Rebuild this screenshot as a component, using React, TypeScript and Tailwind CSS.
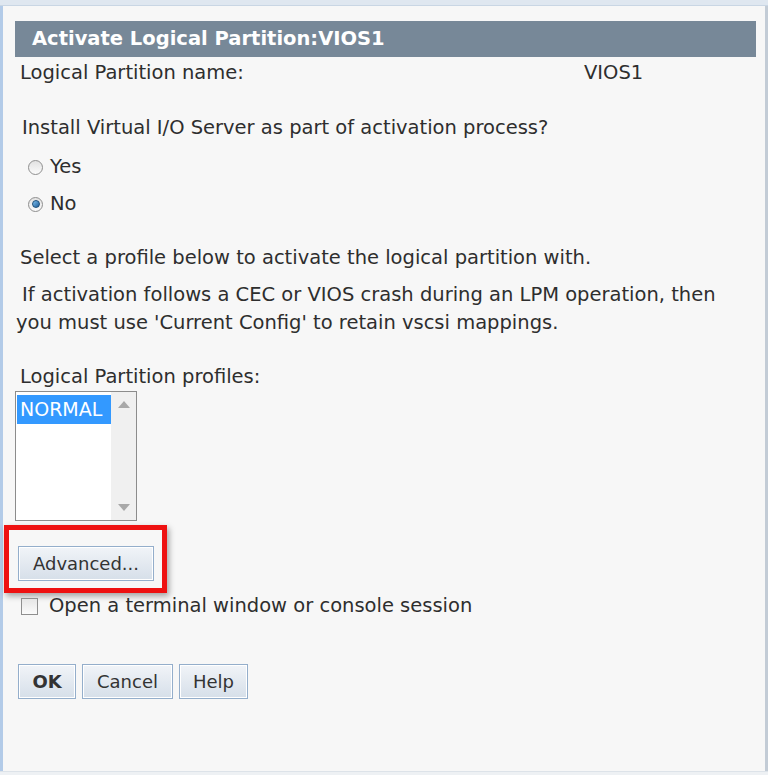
import { useState } from 'react';

const font = { fontFamily: '"DejaVu Sans", Verdana, sans-serif' };

function Radio({ checked }: { checked: boolean }) {
  return (
    <span className="relative inline-flex h-[15px] w-[15px] items-center justify-center rounded-full border border-[#8f8f8f] bg-gradient-to-b from-[#e2e2e2] to-[#fbfbfb]">
      {checked && (
        <span className="h-[8px] w-[8px] rounded-full border border-[#1d4f7a] bg-gradient-to-br from-[#7ec0ee] to-[#1f5f9a]" />
      )}
    </span>
  );
}

function Button({ children, bold, width }: { children: React.ReactNode; bold?: boolean; width: string }) {
  return (
    <button
      type="button"
      className={`${width} h-[35px] border border-[#94aecb] bg-gradient-to-b from-[#f1f4f8] to-[#d6dfe9] text-[18px] leading-none text-[#333] shadow-[inset_0_0_0_1px_#ffffff] ${bold ? 'font-bold' : ''}`}
    >
      {children}
    </button>
  );
}

export default function App() {
  const [install, setInstall] = useState(false);
  const [openTerm, setOpenTerm] = useState(false);

  return (
    <div style={font} className="flex h-[775px] w-[768px] flex-col overflow-hidden bg-[#f7f7f7] text-[#2e2e2e]">
      <div className="h-[6px] border-b border-[#c9d6e4] bg-[#dfe7f0]" />
      <div className="flex flex-1 border-l-[3px] border-r-[3px] border-l-[#b3cbe8] border-r-[#c3ccd6]">
        <div className="flex flex-1 flex-col pl-[12px] pr-[9px]">
          <div className="mt-[15px] flex h-[36px] items-center bg-[#778898] pl-[17px] text-[19.5px] font-bold text-white">
            Activate Logical Partition:VIOS1
          </div>

          <div className="mt-[3px] flex h-[26px] items-center text-[19.5px]">
            <span className="w-[569px] pl-[5px]">Logical Partition name:</span>
            <span>VIOS1</span>
          </div>

          <div className="mt-[29px] pl-[7px] text-[19.5px] leading-[26px]">
            Install Virtual I/O Server as part of activation process?
          </div>
          <label className="mt-[12px] flex items-center gap-[7px] pl-[13px] text-[19.5px] leading-[28px]" onClick={() => setInstall(true)}>
            <Radio checked={install} />
            <span>Yes</span>
          </label>
          <label className="mt-[9px] flex items-center gap-[7px] pl-[13px] text-[19.5px] leading-[28px]" onClick={() => setInstall(false)}>
            <Radio checked={!install} />
            <span>No</span>
          </label>

          <div className="mt-[27px] pl-[5px] text-[19.5px] leading-[26px]">
            Select a profile below to activate the logical partition with.
          </div>
          <div className="mt-[11px] pl-[7px] text-[19.5px] leading-[26px]">
            If activation follows a CEC or VIOS crash during an LPM operation, then
          </div>
          <div className="mt-[2px] pl-[1px] text-[19.5px] leading-[26px]">
            you must use 'Current Config' to retain vscsi mappings.
          </div>

          <div className="mt-[28px] pl-[5px] text-[19.5px] leading-[26px]">Logical Partition profiles:</div>
          <div className="mt-[1px] flex h-[130px] w-[122px] border border-[#8c8c8c] bg-white">
            <div className="flex-1 pl-[1px] pt-[3px]">
              <div className="flex h-[29px] items-center bg-[#3399ff] pl-[3px] text-[19px] text-white">NORMAL</div>
            </div>
            <div className="flex w-[25px] flex-col items-center justify-between bg-[#f0f0f0] py-[9px]">
              <span className="h-0 w-0 border-x-[6px] border-b-[7px] border-x-transparent border-b-[#a8a8a8]" />
              <span className="h-0 w-0 border-x-[6px] border-t-[7px] border-x-transparent border-t-[#a8a8a8]" />
            </div>
          </div>

          <div className="-ml-[11px] mt-[4px] w-[163px] border-[5px] border-[#ee1111] pb-[7px] pl-[9px] pt-[16px] shadow-[2px_3px_6px_rgba(0,0,0,0.35)]">
            <Button width="w-[136px]">Advanced...</Button>
          </div>

          <label className="mt-0 flex items-center gap-[11px] pl-[6px] text-[19.5px] leading-[26px]" onClick={() => setOpenTerm(!openTerm)}>
            <span className="h-[17px] w-[17px] border border-[#8f8f8f] bg-gradient-to-b from-[#e6e6e6] to-[#fbfbfb]">
              {openTerm && <span className="block text-center text-[12px] leading-[15px]">✓</span>}
            </span>
            <span>Open a terminal window or console session</span>
          </label>

          <div className="mt-[45px] flex gap-[6px] pl-[3px]">
            <Button bold width="w-[58px]">OK</Button>
            <Button width="w-[91px]">Cancel</Button>
            <Button width="w-[69px]">Help</Button>
          </div>
        </div>
      </div>
      <div className="h-[4px] border-t border-[#dde3e9] bg-[#eef1f4]" />
    </div>
  );
}
